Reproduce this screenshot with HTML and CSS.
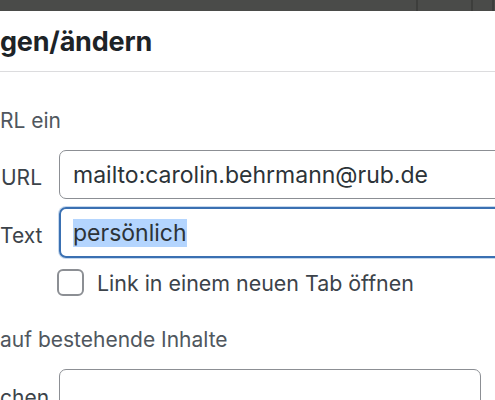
FILE: index.html
```html
<!DOCTYPE html>
<html lang="de">
<head>
<meta charset="utf-8">
<link rel="stylesheet" href="styles.css">
</head>
<body>
<div class="topbar">
  <div class="seg seg1"></div>
  <div class="seg seg2"></div>
  <div class="seg seg3"></div>
  <div class="seg seg4"></div>
</div>
<div class="dialog">
  <div class="header"><h1 class="title">gen/ändern</h1></div>
  <div class="content">
    <p class="howto">RL ein</p>
    <div class="row">
      <span class="label">URL</span>
      <div class="field">mailto:carolin.behrmann@rub.de</div>
    </div>
    <div class="row row-text">
      <span class="label">Text</span>
      <div class="field field-focus"><span class="sel">persönlich</span></div>
    </div>
    <div class="check-row">
      <span class="checkbox"></span>
      <span class="check-label">Link in einem neuen Tab öffnen</span>
    </div>
    <p class="howto howto2">auf bestehende Inhalte</p>
    <div class="row row-search">
      <span class="label">chen</span>
      <div class="field field-search"></div>
    </div>
  </div>
</div>
</body>
</html>
```

FILE: styles.css
```css
html, body {
  margin: 0;
  padding: 0;
  background: #fff;
  overflow: hidden;
}
body {
  width: 495px;
  height: 400px;
  font-family: Inter, "Noto Sans", "Liberation Sans", sans-serif;
  color: #2c3338;
}
.topbar {
  display: flex;
  height: 11px;
  background: #4a4b49;
}
.seg { height: 100%; }
.seg1 { width: 416px; }
.seg2 { width: 53px; border-left: 2px solid #3d3e3c; }
.seg3 { width: 19px; border-left: 2px solid #3d3e3c; }
.seg4 { flex: 1; border-left: 2px solid #3d3e3c; }
.header {
  height: 61px;
  border-bottom: 1px solid #dcdcde;
  box-sizing: border-box;
  display: flex;
  align-items: center;
}
.title {
  margin: 0;
  font-size: 27px;
  font-weight: 700;
  color: #1d2327;
  letter-spacing: -0.2px;
}
.content {
  padding-top: 34px;
}
.howto {
  margin: 0 0 14px 0;
  font-size: 21px;
  color: #50575e;
  line-height: 30px;
}
.row {
  display: flex;
  align-items: center;
  gap: 17px;
}
.label {
  width: 42px;
  flex: none;
  text-align: right;
  font-size: 21px;
  color: #3c434a;
  white-space: nowrap;
  padding-top: 5px;
}
.field {
  flex: none;
  width: 460px;
  height: 49px;
  box-sizing: border-box;
  border: 1px solid #8c8f94;
  border-radius: 7px;
  padding: 0 13px;
  display: flex;
  align-items: center;
  font-size: 23px;
  color: #2c3338;
  white-space: nowrap;
}
.row-text { margin-top: 8px; }
.field-focus {
  height: 51px;
  border: 2px solid #3a70b2;
  padding: 0 12px;
  box-shadow: 0 0 0 1px #c5d8ee;
}
.sel { background: #b4d5fe; }
.check-row {
  display: flex;
  align-items: center;
  gap: 13px;
  margin: 11px 0 0 57px;
}
.checkbox {
  width: 27px;
  height: 27px;
  box-sizing: border-box;
  border: 2px solid #8c8f94;
  border-radius: 6px;
}
.check-label {
  font-size: 21.4px;
  color: #3c434a;
}
.howto2 {
  margin-top: 29px;
}
.row-search {
  align-items: flex-end;
}
.field-search {
  width: 422px;
  height: 60px;
  align-self: flex-start;
}
.row-search .label {
  align-self: flex-start;
  padding-top: 0;
  margin-top: 16px;
}
```
